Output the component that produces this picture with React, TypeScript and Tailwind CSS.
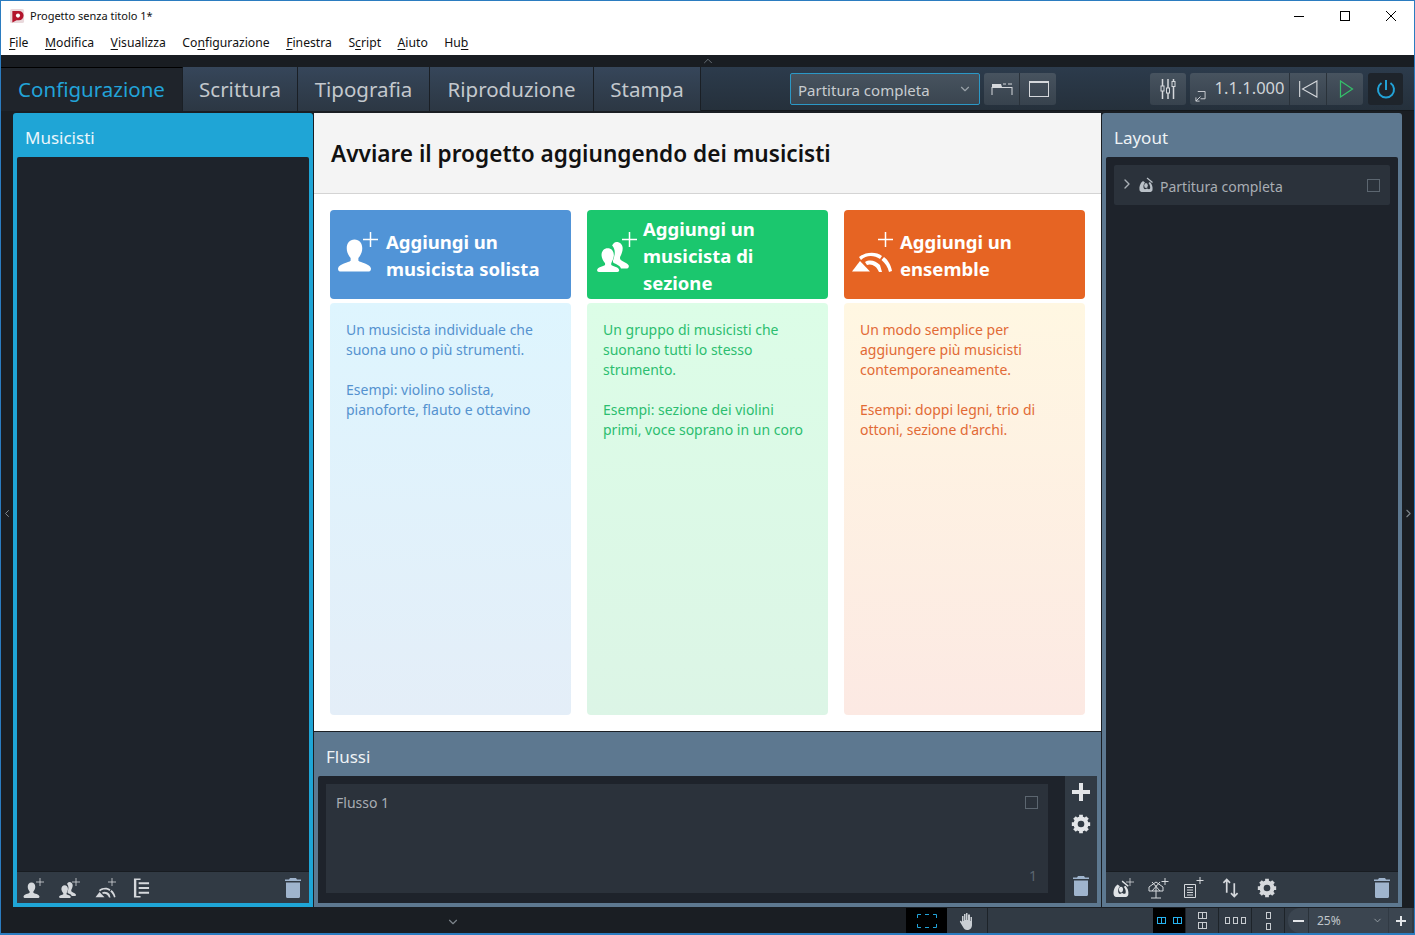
import React from "react";
import { ChevronLeft, ChevronRight, ChevronDown, ChevronUp } from "lucide-react";

const F = "font-['Noto_Sans','Open_Sans',sans-serif]";

function Person({ className = "" }: { className?: string }) {
  return (
    <svg viewBox="0 0 34 34" className={className} fill="currentColor">
      <path d="M17 1c5 0 8 4 8 9 0 4-2 8-4 10v3c2 2 12 3 13 8 0 2-1 3-2 3H2c-1 0-2-1-2-3 1-5 11-6 13-8v-3c-2-2-4-6-4-10 0-5 3-9 8-9z" />
    </svg>
  );
}
function People({ className = "" }: { className?: string }) {
  return (
    <svg viewBox="0 0 36 34" className={className} fill="currentColor">
      <path d="M22 0c4 0 7 3 7 7 0 4-2 8-3 10v2c1 3 8 4 10 8 0 2-1 3-2 3h-7c-1-4-7-5-9-7v-2c1-3 2-6 2-9 0-3-1-6-3-8 1-2 3-4 5-4z" />
      <path d="M12 7c4 0 7 3 7 8 0 3-2 7-3 9v2c2 2 9 2 9 6 0 1-1 2-2 2H2c-1 0-2-1-2-2 0-4 7-4 9-6v-2c-2-2-4-6-4-9 0-5 3-8 7-8z" />
    </svg>
  );
}
function Ensemble({ className = "" }: { className?: string }) {
  return (
    <svg viewBox="0 0 40 22" className={className} fill="currentColor">
      <path d="M0 20.500 L8 10 L18 20.500 Z" />
      <path d="M7 6C13 1 24 0 30 5L28 8C22 4 14 4 9 9Z" />
      <path d="M32 6C36 9 39 14 40 20L37 21C36 16 33 12 29.500 9Z" />
      <path d="M13 11C18 8 24 10 28 14L30 21L27 21C25 15 19 12 15 14Z" />
    </svg>
  );
}
function Plus({ className = "" }: { className?: string }) {
  return (
    <svg viewBox="0 0 14 14" className={className} stroke="currentColor" strokeWidth="1.400" fill="none">
      <path d="M7 0v14M0 7h14" />
    </svg>
  );
}
function Trash() {
  return (
    <svg viewBox="0 0 16 20" className="w-[16px] h-[20px]" fill="#9fb4cd">
      <path d="M5 0h6l1 1.500h4V3H0V1.500h4zM1 4.500h14V18.500c0 .8-.6 1.500-1.500 1.500h-11C1.600 20 1 19.300 1 18.500z" />
    </svg>
  );
}
function Gear({ className = "" }: { className?: string }) {
  return (
    <svg viewBox="0 0 24 24" className={className} fill="none">
      <circle cx="12" cy="12" r="6.500" stroke="currentColor" strokeWidth="5" />
      <path d="M12 1v4M12 19v4M1 12h4M19 12h4M4.200 4.200l2.900 2.900M16.900 16.900l2.900 2.900M19.800 4.200l-2.900 2.900M7.100 16.900l-2.900 2.900" stroke="currentColor" strokeWidth="4.500" />
    </svg>
  );
}
function Conductor({ className = "", color = "#b9c0c7" }: { className?: string; color?: string }) {
  return (
    <svg viewBox="0 0 16 16" className={className} fill={color}>
      <path d="M5 4C2 6 1 10 1.500 13c.3 1.500 1.500 2 3 2h7c1.500 0 2.700-.5 3-2 .5-3-.5-6-2.500-8l-1.500 1c1.500 2 2 4 1.600 5.500-.3 1-1.600 1-2.600.3-.4-.3-.8-.3-1 0-1 .7-2.300.7-2.600-.3C5 10 5.500 7 7 5.500z" />
      <ellipse cx="8" cy="8.500" rx="1.800" ry="2.500" />
      <path d="M9 1l5.500 4.500" stroke={color} strokeWidth="1.200" fill="none" />
    </svg>
  );
}
function Check() {
  return <span className="block w-[13px] h-[13px] border border-[#5c6670]" />;
}
function MenuItem({ before = "", u, after }: { before?: string; u: string; after: string }) {
  return (
    <span>
      {before}
      <span className="underline underline-offset-2">{u}</span>
      {after}
    </span>
  );
}
function Tab({ label, w, active }: { label: string; w: string; active?: boolean }) {
  return (
    <div
      className={
        "h-[44px] flex items-center justify-center text-[20.500px] border-r border-[#1a1f25] " +
        w +
        (active ? " bg-[#1f242b] text-[#22a3d8] border-t border-t-black" : " bg-gradient-to-b from-[#36465a] to-[#2c3743] text-[#c3c8cd]")
      }
    >
      <span className="mt-[1px]">{label}</span>
    </div>
  );
}
function Card({
  bg,
  text,
  title,
  icon,
  p1,
  p2,
  gradient,
}: {
  bg: string;
  text: string;
  title: React.ReactNode;
  icon: React.ReactNode;
  p1: React.ReactNode;
  p2: React.ReactNode;
  gradient: string;
}) {
  return (
    <div className="w-[241px] shrink-0 flex flex-col gap-[4px]">
      <div className={"h-[89px] rounded-[4px] flex items-center text-white " + bg}>
        <div className="relative w-[56px] h-[60px] shrink-0">{icon}</div>
        <div className="text-[18.500px] leading-[27px] font-bold whitespace-nowrap pt-[1px]">{title}</div>
      </div>
      <div className={"h-[412px] rounded-[4px] px-[16px] pt-[17px] text-[14px] leading-[20px] whitespace-nowrap " + gradient + " " + text}>
        <p className="mb-[20px]">{p1}</p>
        <p>{p2}</p>
      </div>
    </div>
  );
}
function SmallBtn({ children, cls = "" }: { children: React.ReactNode; cls?: string }) {
  return <div className={"h-[32px] flex items-center justify-center bg-gradient-to-b from-[#47535f] to-[#37424d] " + cls}>{children}</div>;
}
function ViewBtn({ children, active }: { children: React.ReactNode; active?: boolean }) {
  return (
    <div className={"w-[33px] h-[25px] flex items-center justify-center border-r border-[#1d2329] " + (active ? "bg-black text-[#27b2ee]" : "text-[#c8ccd0]")}>
      {children}
    </div>
  );
}
function Book() {
  return (
    <span className="flex w-[9px] h-[7px] border border-current">
      <span className="block w-[4px] h-full border-r border-current" />
    </span>
  );
}
function Small({ w = "w-[5px]" }: { w?: string }) {
  return <span className={"block h-[7px] border border-current " + w} />;
}

export default function App() {
  return (
    <div className={"w-[1415px] h-[935px] overflow-hidden border border-[#2b7cc0] border-b-[2px] flex flex-col bg-[#1a1e23] text-[#111] " + F}>
      {/* Title bar */}
      <div className="h-[30px] bg-white flex items-center shrink-0 pl-[9px] relative">
        <svg viewBox="0 0 16 16" className="w-[15px] h-[15px] mr-[5px]">
          <rect width="15" height="15" rx="2" fill="#e9d9dc" />
          <path d="M2.500 2h7a5 5 0 0 1 0 10H7l-4.500 2.500z" fill="#b3142c" />
          <circle cx="8.500" cy="7" r="2.200" fill="#fff" />
        </svg>
        <span className="text-[11px] text-[#111]">Progetto senza titolo 1*</span>
        <div className="ml-auto flex items-center text-black">
          <div className="w-[46px] flex justify-center"><span className="block w-[10px] h-px bg-black" /></div>
          <div className="w-[46px] flex justify-center"><span className="block w-[10px] h-[10px] border border-black" /></div>
          <div className="w-[46px] flex justify-center">
            <svg viewBox="0 0 10 10" className="w-[10px] h-[10px]" stroke="#000" strokeWidth="1"><path d="M0 0l10 10M10 0L0 10" /></svg>
          </div>
        </div>
      </div>
      {/* Menu */}
      <div className="h-[24px] bg-white flex items-center gap-[16.500px] pl-[8px] text-[12.200px] shrink-0">
        <MenuItem u="F" after="ile" />
        <MenuItem u="M" after="odifica" />
        <MenuItem u="V" after="isualizza" />
        <MenuItem before="Co" u="n" after="figurazione" />
        <MenuItem u="F" after="inestra" />
        <MenuItem before="S" u="c" after="ript" />
        <MenuItem u="A" after="iuto" />
        <MenuItem before="Hu" u="b" after="" />
      </div>
      {/* Strip */}
      <div className="h-[12px] shrink-0 bg-[#191d22] flex items-center justify-center">
        <ChevronUp size={14} className="text-[#717980]" strokeWidth={1.500} />
      </div>
      {/* Tabs */}
      <div className="h-[44px] shrink-0 flex items-center bg-gradient-to-b from-[#2c3b4c] to-[#25303b] border-b border-[#14181c]">
        <Tab label="Configurazione" w="w-[182px]" active />
        <Tab label="Scrittura" w="w-[115px]" />
        <Tab label="Tipografia" w="w-[132px]" />
        <Tab label="Riproduzione" w="w-[164px]" />
        <Tab label="Stampa" w="w-[107px]" />
        <div className="w-[89px]" />
        <div className="w-[190px] h-[32px] rounded-[2px] border border-[#2b98c6] bg-gradient-to-b from-[#47535f] to-[#3a4550] flex items-center px-[7px] text-[15px] text-[#c8ccd0]">
          <span className="mt-[4px]">Partitura completa</span>
          <ChevronDown size={14} className="ml-auto text-[#9aa2a9]" />
        </div>
        <div className="w-[4px]" />
        <SmallBtn cls="w-[36px] rounded-l-[3px] border-r border-[#2a323a]">
          <svg viewBox="0 0 22 14" className="w-[22px] h-[14px]" fill="none">
            <path d="M1 2h9l1 3H1z" fill="#d5d8dc" />
            <path d="M12 2h3M17 2h4M21 5.500H1M21 5v8M1 5v8" stroke="#d5d8dc" />
          </svg>
        </SmallBtn>
        <SmallBtn cls="w-[36px] rounded-r-[3px] pl-[1px]">
          <span className="block w-[20px] h-[16px] border border-[#d5d8dc] border-t-[2px]" />
        </SmallBtn>
        <div className="w-[94px]" />
        <SmallBtn cls="w-[36px] rounded-[3px]">
          <svg viewBox="0 0 16 20" className="w-[16px] h-[20px]" stroke="#d5d8dc" strokeWidth="1.500" fill="none">
            <path d="M2.500 0v7M2.500 12v8M8 0v9M8 14v6M13.500 0v2M13.500 8v12" />
            <rect x="1" y="7" width="3" height="5" strokeWidth="1" />
            <rect x="6.500" y="9" width="3" height="5" strokeWidth="1" />
            <rect x="12" y="2.500" width="3" height="5" strokeWidth="1" />
          </svg>
        </SmallBtn>
        <div className="w-[4px]" />
        <SmallBtn cls="w-[20px] rounded-l-[3px] items-end pb-[3px]">
          <svg viewBox="0 0 12 12" className="w-[11px] h-[11px]" stroke="#d5d8dc" fill="none">
            <path d="M3 .500h8v8H6M1 11l5-5M1 7v4h4" />
          </svg>
        </SmallBtn>
        <SmallBtn cls="w-[80px] border-r border-[#2a323a] text-[#d0d4d8] text-[16.500px]">1.1.1.000</SmallBtn>
        <SmallBtn cls="w-[37px] border-r border-[#2a323a]">
          <svg viewBox="0 0 18 18" className="w-[20px] h-[18px]" stroke="#d5d8dc" fill="none" preserveAspectRatio="none">
            <path d="M1.500 1v16M17 1L4 9l13 8z" />
          </svg>
        </SmallBtn>
        <SmallBtn cls="w-[36px] rounded-r-[3px] pl-[2px]">
          <svg viewBox="0 0 14 18" className="w-[15px] h-[18px]" stroke="#35c06a" strokeWidth="1.200" fill="none">
            <path d="M1 1l12 8-12 8z" />
          </svg>
        </SmallBtn>
        <div className="w-[5px]" />
        <div className="w-[35px] h-[32px] rounded-[3px] bg-[#1e242b] flex items-center justify-center">
          <svg viewBox="0 0 20 20" className="w-[20px] h-[20px]" stroke="#22a3d8" strokeWidth="2" fill="none">
            <path d="M10 1v10M5.500 4a8 8 0 1 0 9 0" />
          </svg>
        </div>
      </div>

      {/* Main */}
      <div className="flex-1 flex min-h-0 pt-[2px]">
        <div className="w-[12px] shrink-0 flex items-center justify-center pt-[6px]">
          <ChevronLeft size={13} className="text-[#7c848b]" />
        </div>
        {/* Left panel */}
        <div className="w-[300px] shrink-0 mb-[1px] rounded-t-[3px] bg-[#1fa5d6] px-[4px] pb-[4px] flex flex-col">
          <div className="h-[44px] shrink-0 flex items-center pl-[8px] pt-[6px] text-[17px] text-[#eaf6fb]">Musicisti</div>
          <div className="flex-1 bg-[#1e232b] rounded-t-[2px]" />
          <div className="h-[32px] shrink-0 bg-[#313a44] border-t border-[#181c21] flex items-center px-[6px] text-[#d5d8dc]">
            <div className="relative w-[22px] h-[20px]"><Person className="absolute left-0 bottom-0 w-[17px] h-[16px]" /><Plus className="absolute left-[13px] top-0 w-[8px] h-[8px]" /></div>
            <div className="relative w-[22px] h-[20px] ml-[14px]"><People className="absolute left-0 bottom-0 w-[17px] h-[16px]" /><Plus className="absolute left-[13px] top-0 w-[8px] h-[8px]" /></div>
            <div className="relative w-[22px] h-[20px] ml-[14px]"><Ensemble className="absolute left-0 bottom-0 w-[21px] h-[11px]" /><Plus className="absolute left-[13px] top-0 w-[8px] h-[8px]" /></div>
            <svg viewBox="0 0 18 20" className="w-[17px] h-[20px] ml-[16px]" fill="#d5d8dc">
              <path d="M1 0h7v1.500H3.500v17H8V20H1z" />
              <path d="M6 4h11v2H6zM6 9h11v2H6zM6 14h11v2H6z" />
            </svg>
            <div className="ml-auto mr-[2px]"><Trash /></div>
          </div>
        </div>
        {/* Center */}
        <div className="w-[787px] shrink-0 mx-px mb-px flex flex-col min-w-0">
          <div className="flex-1 bg-white flex flex-col min-h-0">
            <div className="h-[81px] bg-[#f4f4f4] border-b border-[#d4d4d4] flex items-center pl-[17px] pt-[2px] text-[22.600px] font-semibold text-[#111] shrink-0">
              Avviare il progetto aggiungendo dei musicisti
            </div>
            <div className="flex gap-[16px] pl-[16px] pt-[16px]">
              <Card
                bg="bg-[#5194d7]"
                text="text-[#5592cf]"
                gradient="bg-gradient-to-b from-[#def5fe] to-[#e4eef8]"
                title={<>Aggiungi un<br />musicista solista</>}
                icon={<><Person className="absolute left-[8px] top-[13px] w-[33px] h-[34px]" /><Plus className="absolute left-[33px] top-[7px] w-[15px] h-[15px]" /></>}
                p1={<>Un musicista individuale che<br />suona uno o più strumenti.</>}
                p2={<>Esempi: violino solista,<br />pianoforte, flauto e ottavino</>}
              />
              <Card
                bg="bg-[#1bc76e]"
                text="text-[#2cbe70]"
                gradient="bg-gradient-to-b from-[#dcfde7] to-[#dcf5e6]"
                title={<>Aggiungi un<br />musicista di<br />sezione</>}
                icon={<><People className="absolute left-[8px] top-[17px] w-[36px] h-[30px]" /><Plus className="absolute left-[35px] top-[7px] w-[15px] h-[15px]" /></>}
                p1={<>Un gruppo di musicisti che<br />suonano tutti lo stesso<br />strumento.</>}
                p2={<>Esempi: sezione dei violini<br />primi, voce soprano in un coro</>}
              />
              <Card
                bg="bg-[#e66423]"
                text="text-[#e26a35]"
                gradient="bg-gradient-to-b from-[#fff7e2] to-[#fce9e3]"
                title={<>Aggiungi un<br />ensemble</>}
                icon={<><Ensemble className="absolute left-[8px] top-[26px] w-[40px] h-[22px]" /><Plus className="absolute left-[34px] top-[7px] w-[15px] h-[15px]" /></>}
                p1={<>Un modo semplice per<br />aggiungere più musicisti<br />contemporaneamente.</>}
                p2={<>Esempi: doppi legni, trio di<br />ottoni, sezione d'archi.</>}
              />
            </div>
          </div>
          <div className="h-[176px] shrink-0 bg-[#5d7890] px-[4px] pb-[4px] flex flex-col border-t border-[#1b2025]">
            <div className="h-[44px] shrink-0 flex items-center pl-[8px] pt-[6px] text-[17px] text-[#eef2f5]">Flussi</div>
            <div className="flex-1 flex bg-[#1e232b] rounded-t-[2px] min-h-0">
              <div className="flex-1 p-[8px] pr-[17px] pb-[10px]">
                <div className="relative h-full bg-[#2b323b] pl-[10px] pt-[8px] text-[14px] text-[#a8adb3]">
                  Flusso 1
                  <div className="absolute right-[10px] top-[12px]"><Check /></div>
                  <span className="absolute right-[11px] bottom-[7px] text-[14px] text-[#5c6670]">1</span>
                </div>
              </div>
              <div className="w-[32px] bg-[#313a44] flex flex-col items-center pt-[7px] pb-[7px] text-[#e3e5e8]">
                <svg viewBox="0 0 18 18" className="w-[18px] h-[18px]" stroke="currentColor" strokeWidth="4" fill="none"><path d="M9 0v18M0 9h18" /></svg>
                <Gear className="w-[20px] h-[20px] mt-[13px]" />
                <div className="mt-auto"><Trash /></div>
              </div>
            </div>
          </div>
        </div>
        {/* Right panel */}
        <div className="w-[300px] shrink-0 mb-[1px] rounded-t-[3px] bg-[#5d7890] px-[4px] pb-[4px] flex flex-col">
          <div className="h-[44px] shrink-0 flex items-center pl-[8px] pt-[6px] text-[17px] text-[#eef2f5]">Layout</div>
          <div className="flex-1 bg-[#1e232b] rounded-t-[2px] p-[8px]">
            <div className="h-[40px] bg-[#2b323b] flex items-center pl-[5px] pr-[10px] text-[14px] text-[#a8adb3] rounded-[2px]">
              <ChevronRight size={16} className="text-[#aab0b6] mb-[2px]" />
              <Conductor className="w-[16px] h-[16px] ml-[3px] mr-[5px]" />
              <span className="ml-[1px] mt-[2px]">Partitura completa</span>
              <div className="ml-auto"><Check /></div>
            </div>
          </div>
          <div className="h-[32px] shrink-0 bg-[#313a44] border-t border-[#181c21] flex items-center px-[4px] text-[#d5d8dc]">
            <div className="relative w-[22px] h-[20px] ml-[2px]">
              <Conductor className="absolute left-0 bottom-0 w-[18px] h-[18px]" color="#e0e3e6" />
              <Plus className="absolute left-[14px] top-0 w-[8px] h-[8px]" />
            </div>
            <svg viewBox="0 0 22 22" className="w-[22px] h-[22px] ml-[13px]" stroke="#d5d8dc" fill="none">
              <path d="M9 8v13M4 21h10M2 10l7-5 7 5v4H2zM5 5l8 9M13 5l-8 9" />
              <path d="M18 1v7M14.500 4.500h7" />
            </svg>
            <svg viewBox="0 0 22 22" className="w-[22px] h-[22px] ml-[14px]" stroke="#d5d8dc" fill="none">
              <path d="M1.500 7.500h11v13h-11zM4 10.500h6M4 13h6M4 15.500h6M4 18h6" />
              <path d="M17 0v7M13.500 3.500h7" />
            </svg>
            <svg viewBox="0 0 18 20" className="w-[17px] h-[20px] ml-[17px]" stroke="#d5d8dc" strokeWidth="1.800" fill="none">
              <path d="M5 15V1M1.500 4.500L5 1l3.500 3.500M13 5v14M9.500 15.500L13 19l3.500-3.500" />
            </svg>
            <Gear className="w-[20px] h-[20px] ml-[18px]" />
            <div className="ml-auto mr-[4px]"><Trash /></div>
          </div>
        </div>
        <div className="flex-1 flex items-center justify-center pt-[6px]">
          <ChevronRight size={13} className="text-[#7c848b]" />
        </div>
      </div>

      {/* Status bar */}
      <div className="h-[25px] shrink-0 bg-[#1a1e23] flex items-center">
        <div className="w-[905px] flex justify-center pr-[2px] pt-[3px]"><ChevronDown size={14} className="text-[#7c848b]" /></div>
        <div className="w-[41px] h-[25px] bg-black flex items-center justify-center">
          <svg viewBox="0 0 20 14" className="w-[20px] h-[14px]" fill="none" stroke="#22a3d8">
            <path d="M.500 4V.500H4M8 .500h4M16 .500h3.500V4M.500 10v3.500H4M8 13.500h4M16 13.500h3.500V10" />
          </svg>
        </div>
        <div className="w-[41px] h-[25px] bg-[#313a44] border-r border-[#1d2329] flex items-center justify-center">
          <svg viewBox="0 0 16 18" className="w-[16px] h-[20px]" fill="#c9ced3">
            <path d="M3 7v-3h1.500v5h.5V2h1.500v6h.5V1h1.500v7h.5V2.500H11V9h.5V5H13v8c0 3-2 5-5 5-2 0-3-1-4-3L1 10c-.5-1 1-2 2 0z" />
          </svg>
        </div>
        <div className="w-[165px] h-[25px] bg-[#313a44]" />
        <div className="h-[25px] flex items-center bg-[#313a44] flex-1">
          <ViewBtn active><div className="flex gap-[7px]"><Book /><Book /></div></ViewBtn>
          <ViewBtn><div className="flex flex-col gap-[3px]"><Book /><Book /></div></ViewBtn>
          <ViewBtn><div className="flex gap-[3px]"><Small /><Small /><Small /></div></ViewBtn>
          <ViewBtn><div className="flex flex-col gap-[4px]"><Small /><Small /></div></ViewBtn>
          <div className="flex items-center h-[25px] ml-[3px] flex-1 text-[#c0c5ca] gap-px">
            <div className="flex items-center h-full w-[100px] bg-[#3b4550] rounded-l-[12px]">
              <div className="w-[20px] flex justify-center text-[#e3e5e8]"><span className="block w-[11px] h-[2px] bg-current" /></div>
              <div className="flex-1 h-full border-l border-[#2a323a] flex items-center pl-[8px] text-[12px]">
                <span className="mt-[1px]">25%</span>
                <ChevronDown size={11} className="ml-auto mr-[5px] text-[#9aa2a9]" />
              </div>
            </div>
            <div className="w-[23px] h-full bg-[#3b4550] flex items-center justify-center text-[#e3e5e8]">
              <svg viewBox="0 0 10 10" className="w-[10px] h-[10px]" stroke="currentColor" strokeWidth="2"><path d="M5 0v10M0 5h10" /></svg>
            </div>
          </div>
        </div>
      </div>
    </div>
  );
}
